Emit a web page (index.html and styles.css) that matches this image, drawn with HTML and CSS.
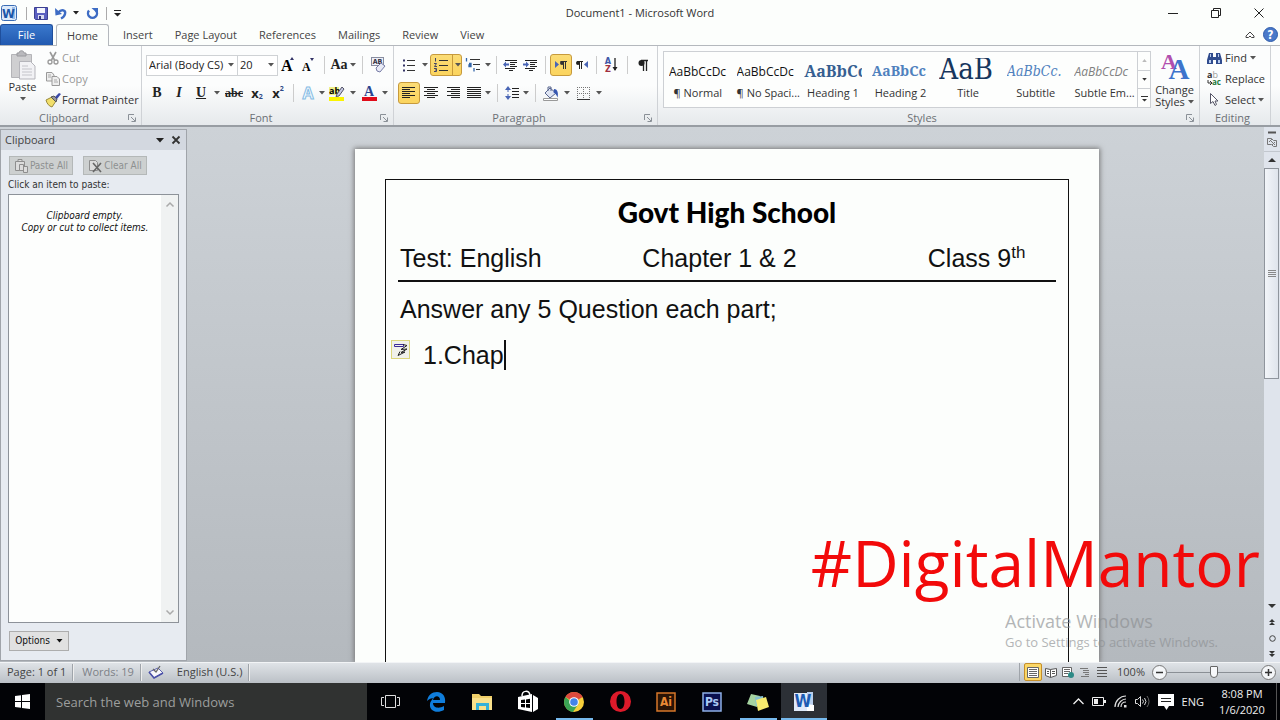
FILE: index.html
```html
<!DOCTYPE html>
<html lang="en">
<head>
<meta charset="utf-8">
<title>Document1 - Microsoft Word</title>
<link rel="stylesheet" href="styles.css">
</head>
<body>
<svg class="defs" aria-hidden="true">
  <symbol id="caret" viewBox="0 0 6 4"><path d="M0 0h6L3 3.5z" fill="currentColor"/></symbol>
  <symbol id="launch" viewBox="0 0 8 8"><path d="M.5 6V.5H6M3 3l4 4M7.500 3.500v4h-4" fill="none" stroke="#8a9097"/></symbol>
</svg>

<header class="titlebar">
  <div class="quick">
    <button aria-label="Word"><svg width="16" height="16" viewBox="0 0 16 16"><rect x=".5" y=".5" width="15" height="15" rx="2" fill="#dceafa" stroke="#3a6cb4"/><path d="M11 2h3v12h-3z" fill="#9dbde6"/><text class="glyph" x="7.500" y="12.500" font-size="13" fill="#1c57a8">W</text></svg></button>
    <i class="bar"></i>
    <button aria-label="Save"><svg width="14" height="14" viewBox="0 0 14 14"><path d="M.5 1.500h13v12h-12l-1-1z" fill="#5a5fc0" stroke="#3b3f91"/><path d="M3 2h8v5H3z" fill="#f3f5fc"/><path d="M4 9h6v4H4z" fill="#d7daf0"/><path d="M5 10h2v3H5z" fill="#33377f"/></svg></button>
    <button class="undo" aria-label="Undo"><svg width="12" height="13" viewBox="0 0 12 13"><path d="M3 5.500c4-4 8-2 7 1.500-.4 2-2 3.500-4 4.500" fill="none" stroke="#3d6cc4" stroke-width="2.400"/><path d="M0 1l.5 7.500L7 7z" fill="#3d6cc4"/></svg><svg class="c" width="6" height="4"><use href="#caret"/></svg></button>
    <button aria-label="Repeat"><svg width="13" height="13" viewBox="0 0 13 13"><path d="M3 3.500a4.500 4.500 0 1 0 7 0" fill="none" stroke="#3d6cc4" stroke-width="2.400"/><path d="M5.500 1h6.500v6z" fill="#3d6cc4"/></svg></button>
    <i class="bar"></i>
    <button aria-label="Customize Quick Access Toolbar"><svg width="7" height="7" viewBox="0 0 7 7"><path d="M0 0h7v1H0zM0 3h7L3.500 6.500z" fill="#222"/></svg></button>
  </div>
  <h1>Document1 - Microsoft Word</h1>
  <div class="winbtns">
    <button aria-label="Minimize"><svg width="10" height="10" viewBox="0 0 10 10"><path d="M0 5.500h10" stroke="#222"/></svg></button>
    <button aria-label="Restore"><svg width="10" height="10" viewBox="0 0 10 10" fill="none" stroke="#222"><path d="M.5 2.500h7v7h-7zM2.500 2.500v-2h7v7h-2"/></svg></button>
    <button aria-label="Close"><svg width="10" height="10" viewBox="0 0 10 10" stroke="#222"><path d="M.5.5l9 9M9.500.5l-9 9"/></svg></button>
  </div>
</header>

<nav class="tabs">
  <button class="file">File</button>
  <button class="on">Home</button>
  <button>Insert</button>
  <button>Page Layout</button>
  <button>References</button>
  <button>Mailings</button>
  <button>Review</button>
  <button>View</button>
  <div class="help">
    <button aria-label="Minimize the Ribbon"><svg width="10" height="8" viewBox="0 0 10 8"><path d="M1 5l4-4 4 4v1.500H6.500L5 5 3.500 6.500H1z" fill="#fff" stroke="#444"/></svg></button>
    <button aria-label="Help"><svg width="15" height="15" viewBox="0 0 15 15"><circle cx="7.500" cy="7.500" r="7" fill="#4a79c9" stroke="#2f5cab"/><text class="glyph" x="7.500" y="12" font-size="12" fill="#fff">?</text></svg></button>
  </div>
</nav>

<section class="ribbon">
  <div class="group clip">
    <div class="body">
      <button class="big"><svg width="26" height="30" viewBox="0 0 26 30"><path d="M1.500 4.500h20v23h-20z" fill="#cfcfd1" stroke="#b4b4b8"/><path d="M7 6V3h2c0-3 5-3 5 0h2v3z" fill="#b9b9bd" stroke="#9a9a9e"/><path d="M9.500 11.500h11l4.500 4.500v13H9.500z" fill="#f2f2f5" stroke="#b5b5bb"/><path d="M12 16h6M12 19h10M12 22h10M12 25h10" stroke="#c4c4ca"/></svg><span>Paste</span><svg class="c" width="6" height="4"><use href="#caret"/></svg></button>
      <div class="stack">
        <button class="dim"><svg width="16" height="14" viewBox="0 0 16 14" fill="none" stroke="#999"><path d="M5 1l4.500 8M11 1L6.500 9" stroke-width="1.600"/><circle cx="5" cy="11" r="2" stroke-width="1.300"/><circle cx="11" cy="11" r="2" stroke-width="1.300"/></svg>Cut</button>
        <button class="dim"><svg width="16" height="14" viewBox="0 0 16 14" fill="#eee" stroke="#999"><path d="M1.500.5H7L9 3v6H1.500z"/><path d="M7 4.500h5l2.500 2.500v6.500H7z"/><path d="M3 3h3M3 5h3M9 8h3M9 10h4" stroke="#aaa"/></svg>Copy</button>
        <button><svg width="16" height="14" viewBox="0 0 16 14"><path d="M1 7l6-3 4 4-4 6c-3-1-5-3-6-7z" fill="#f2df6b" stroke="#9a8a3a"/><path d="M6 4l3-1 3 3-1 3z" fill="#999" stroke="#555"/><path d="M10 4l4-4 2 1-4 5z" fill="#3a49a8"/></svg>Format Painter</button>
      </div>
    </div>
    <footer><span>Clipboard</span><svg width="8" height="8"><use href="#launch"/></svg></footer>
  </div>

  <div class="group font">
    <div class="body rows">
      <div class="row">
        <div class="combo name"><select aria-label="Font"><option>Arial (Body CS)</option></select><svg class="c" width="6" height="4"><use href="#caret"/></svg></div>
        <div class="combo size"><select aria-label="Font size"><option>20</option></select><svg class="c" width="6" height="4"><use href="#caret"/></svg></div>
        <button class="w20 serif" aria-label="Grow font"><svg width="16" height="16" viewBox="0 0 16 16"><text x="1" y="14" font-size="16">A</text><path d="M10 3l2-3 2 3z" fill="#336"/></svg></button>
        <button class="w20 serif" aria-label="Shrink font"><svg width="16" height="16" viewBox="0 0 16 16"><text x="2" y="14" font-size="12">A</text><path d="M10 1l2 3 2-3z" fill="#336"/></svg></button>
        <i class="sep"></i>
        <button class="w26 serif">Aa<svg class="c" width="6" height="4"><use href="#caret"/></svg></button>
        <i class="sep"></i>
        <button class="w20" aria-label="Clear formatting"><svg width="16" height="16" viewBox="0 0 16 16"><rect x="1.500" y=".5" width="12" height="8" fill="#eef0f8" stroke="#888da0"/><text class="glyph" x="7.500" y="7" font-size="7" fill="#334">AB</text><path d="M6 11l5-5 4 3-5 6-3-1z" fill="#e8eaf6" stroke="#777ca6"/></svg></button>
      </div>
      <div class="row">
        <button class="w22 serif"><b>B</b></button>
        <button class="w22 serif"><i>I</i></button>
        <button class="split serif"><u>U</u><svg class="c" width="6" height="4"><use href="#caret"/></svg></button>
        <button class="w24 serif small"><s>abc</s></button>
        <button class="w22 sans" aria-label="Subscript">x<sub>2</sub></button>
        <button class="w20 sans" aria-label="Superscript">x<sup>2</sup></button>
        <i class="sep n"></i>
        <button class="split t" aria-label="Text effects"><svg width="14" height="14" viewBox="0 0 14 14"><text class="glyph fx" x="7" y="13" font-size="16">A</text></svg><svg class="c" width="6" height="4"><use href="#caret"/></svg></button>
        <button class="split" aria-label="Highlight"><svg width="16" height="15" viewBox="0 0 16 15"><path d="M0 1h10v8H0z" fill="#eef08a"/><text x="0" y="8" font-size="9" font-weight="bold">ab</text><path d="M8 8l5-7 2 2-5 7-3 .5z" fill="#c4c8e2" stroke="#556"/><path d="M0 11h15v4H0z" fill="#fbf400"/></svg><svg class="c" width="6" height="4"><use href="#caret"/></svg></button>
        <button class="split serif" aria-label="Font color"><svg width="15" height="15" viewBox="0 0 15 15"><text x="2" y="10" font-size="14" fill="#2b4590">A</text><path d="M0 11h15v4H0z" fill="#e00b19"/></svg><svg class="c" width="6" height="4"><use href="#caret"/></svg></button>
      </div>
    </div>
    <footer><span>Font</span><svg width="8" height="8"><use href="#launch"/></svg></footer>
  </div>

  <div class="group para">
    <div class="body rows">
      <div class="row">
        <button class="split" aria-label="Bullets"><svg width="14" height="14" viewBox="0 0 14 14" stroke="#333"><path d="M5 2.500h8M5 7.500h8M5 12.500h8"/><path d="M1 2.500h2M1 7.500h2M1 12.500h2" stroke="#336" stroke-width="2"/></svg><svg class="c" width="6" height="4"><use href="#caret"/></svg></button>
        <button class="split on two" aria-label="Numbering"><svg width="14" height="14" viewBox="0 0 14 14" stroke="#333"><path d="M5 2.500h9M5 7.500h9M5 12.500h9"/><path d="M1.500 0v3.500M0 5.500h2.500L.5 8.500H3M0 10.500h2.500v3H0M1 12h1" fill="none" stroke="#446"/></svg><svg class="c" width="6" height="4"><use href="#caret"/></svg></button>
        <button class="split m" aria-label="Multilevel list"><svg width="16" height="14" viewBox="0 0 16 14" stroke="#333" fill="none"><path d="M5 1.500h10M8 6.500h7M11 11.500h4"/><path d="M1.500 0v3.500M4 5.500h2v3H4V7h2M9 10v3.500" stroke="#36a" stroke-width="1.300"/></svg><svg class="c" width="6" height="4"><use href="#caret"/></svg></button>
        <i class="sep s"></i>
        <button class="w20" aria-label="Decrease indent"><svg width="15" height="13" viewBox="0 0 15 13" stroke="#222"><path d="M2 1.500h12M7 3.500h7M7 5.500h5M7 7.500h7M2 9.500h10M6 11.500h4"/><path d="M0 5.500l3-3v2h3v2H3v2z" fill="#4965b5" stroke="none"/></svg></button>
        <button class="w20" aria-label="Increase indent"><svg width="15" height="13" viewBox="0 0 15 13" stroke="#222"><path d="M2 1.500h12M7 3.500h7M7 5.500h5M7 7.500h7M2 9.500h10M6 11.500h4"/><path d="M6 5.500l-3-3v2H0v2h3v2z" fill="#4965b5" stroke="none"/></svg></button>
        <i class="sep n"></i>
        <button class="w22 on" aria-label="Left-to-right"><svg width="14" height="10" viewBox="0 0 14 10"><path d="M1 1v7l4-3.500z" fill="#4965b5"/><path d="M6.500 1.500H13M9.500 1v8M11.500 1v8" stroke="#333"/><circle cx="8" cy="3" r="2" fill="#333"/></svg></button>
        <button class="w20" aria-label="Right-to-left"><svg width="14" height="10" viewBox="0 0 14 10"><path d="M13 1v7L9 4.500z" fill="#4965b5"/><path d="M2 1.500h6M4.500 1v8M6.500 1v8" stroke="#222"/><circle cx="3" cy="3" r="2" fill="#222"/></svg></button>
        <i class="sep s"></i>
        <button class="w22" aria-label="Sort"><svg width="14" height="16" viewBox="0 0 14 16"><text class="glyph" x="4" y="7" font-size="9" fill="#4058a8">A</text><text class="glyph" x="4" y="15" font-size="9" fill="#a03040">Z</text><path d="M11 1v12" stroke="#222" stroke-width="1.300"/><path d="M8.500 10h5L11 14z" fill="#222"/></svg></button>
        <i class="sep n"></i>
        <button class="w22" aria-label="Show paragraph marks"><svg width="10" height="13" viewBox="0 0 10 13"><path d="M3 1.500h7M5.500 1v11M8.500 1v11" stroke="#222" stroke-width="1.300"/><circle cx="3.500" cy="4" r="3" fill="#222"/></svg></button>
      </div>
      <div class="row">
        <button class="w22 on" aria-label="Align left"><svg width="14" height="12" viewBox="0 0 14 12" stroke="#222"><path d="M0 .5h13M0 2.500h8M0 4.500h13M0 6.500h8M0 8.500h13M0 10.500h8"/></svg></button>
        <button class="w22" aria-label="Center"><svg width="14" height="12" viewBox="0 0 14 12" stroke="#222"><path d="M0 .5h14M3 2.500h8M0 4.500h14M3 6.500h8M0 8.500h14M3 10.500h8"/></svg></button>
        <button class="w22" aria-label="Align right"><svg width="14" height="12" viewBox="0 0 14 12" stroke="#222"><path d="M1 .5h13M5 2.500h9M1 4.500h13M5 6.500h9M1 8.500h13M5 10.500h9"/></svg></button>
        <button class="split t" aria-label="Justify"><svg width="14" height="12" viewBox="0 0 14 12" stroke="#222"><path d="M0 .5h14M0 2.500h14M0 4.500h14M0 6.500h14M0 8.500h14M0 10.500h14"/></svg><svg class="c" width="6" height="4"><use href="#caret"/></svg></button>
        <i class="sep n"></i>
        <button class="split t" aria-label="Line spacing"><svg width="14" height="14" viewBox="0 0 14 14" stroke="#222"><path d="M7 2.500h7M7 5.500h7M7 8.500h7M7 11.500h7"/><path d="M3 3v3M3 8v3" stroke="#4965b5"/><path d="M0 4l3-4 3 4zM0 10l3 4 3-4z" fill="#4965b5" stroke="none"/></svg><svg class="c" width="6" height="4"><use href="#caret"/></svg></button>
        <i class="sep n"></i>
        <button class="split" aria-label="Shading"><svg width="16" height="15" viewBox="0 0 16 15"><path d="M7 2l6 5-6 5-5-5z" fill="#dfe5f3" stroke="#57648e"/><path d="M5 5V1h3v4" fill="none" stroke="#57648e"/><path d="M11 3c4 0 4.500 5 3.500 8.500-1-2.500-2-4-4-5z" fill="#3556b0"/><path d="M.5 12.500h14v2H.5z" fill="#fff" stroke="#999"/></svg><svg class="c" width="6" height="4"><use href="#caret"/></svg></button>
        <button class="split" aria-label="Borders"><svg width="13" height="13" viewBox="0 0 13 13" stroke="#777"><path d="M0 .5h13M0 6.500h13M.5 0v12M6.500 0v12M12.500 0v12" stroke-dasharray="1 1"/><path d="M0 12.500h13" stroke="#333"/></svg><svg class="c" width="6" height="4"><use href="#caret"/></svg></button>
      </div>
    </div>
    <footer><span>Paragraph</span><svg width="8" height="8"><use href="#launch"/></svg></footer>
  </div>

  <div class="group styles">
    <div class="body">
      <div class="gallery">
        <button><span class="p">AaBbCcDc</span><span>¶ Normal</span></button>
        <button><span class="p">AaBbCcDc</span><span>¶ No Spaci...</span></button>
        <button><span class="p h1">AaBbCc</span><span>Heading 1</span></button>
        <button><span class="p h2">AaBbCc</span><span>Heading 2</span></button>
        <button><span class="p title">AaB</span><span>Title</span></button>
        <button><span class="p sub">AaBbCc.</span><span>Subtitle</span></button>
        <button><span class="p em">AaBbCcDc</span><span>Subtle Em...</span></button>
        <div class="scroller">
          <button aria-label="Up"><svg width="5" height="3" viewBox="0 0 6 4"><path d="M0 4h6L3 0z" fill="#bbb"/></svg></button>
          <button aria-label="Down"><svg width="5" height="3"><use href="#caret"/></svg></button>
          <button aria-label="More"><svg width="7" height="7" viewBox="0 0 7 7"><path d="M0 1h7v1H0zM1 4h5L3.500 6.500z" fill="#333"/></svg></button>
        </div>
      </div>
      <button class="big change"><svg width="28" height="28" viewBox="0 0 28 28"><text class="glyph s" x="8" y="17" font-size="22" fill="#b14fae">A</text><text class="glyph s" x="18" y="27" font-size="29" fill="#3d74cc">A</text></svg><span>Change</span><span class="line">Styles<svg class="c" width="6" height="4"><use href="#caret"/></svg></span></button>
    </div>
    <footer><span>Styles</span><svg width="8" height="8"><use href="#launch"/></svg></footer>
  </div>

  <div class="group edit">
    <div class="body">
      <div class="stack">
        <button><svg width="15" height="13" viewBox="0 0 15 13"><path d="M2 1h4v4h3V1h4l2 7v4H9V8H6v4H0V8z" fill="#304c8e"/><path d="M2 8h2v3H2zM11 8h2v3h-2zM3 2h1v3H3zM11 2h1v3h-1z" fill="#b9cdf0"/></svg>Find<svg class="c" width="6" height="4"><use href="#caret"/></svg></button>
        <button><svg width="15" height="14" viewBox="0 0 15 14"><text x="0" y="6" font-size="9" font-weight="bold" fill="#333">a<tspan font-weight="normal" fill="#999">b</tspan></text><text x="5" y="13" font-size="8" font-weight="bold" fill="#257a3b">ac</text><path d="M1 8v3h3M3 9l2 2-2 2" fill="none" stroke="#333"/></svg>Replace</button>
        <button><svg width="15" height="13" viewBox="0 0 15 13"><path d="M3.500.5v10l2.500-2 2 4 1.500-1-1.500-3.500h3z" fill="#fff" stroke="#556"/></svg>Select<svg class="c" width="6" height="4"><use href="#caret"/></svg></button>
      </div>
    </div>
    <footer><span>Editing</span></footer>
  </div>
</section>

<main class="work">
  <aside class="pane">
    <header><h2>Clipboard</h2><button aria-label="Pane menu"><svg width="8" height="5" viewBox="0 0 8 5"><path d="M0 0h8L4 4.500z" fill="#222"/></svg></button><button aria-label="Close pane"><svg width="8" height="8" viewBox="0 0 8 8"><path d="M.5.5l7 7M7.500.5l-7 7" stroke="#333" stroke-width="1.800"/></svg></button></header>
    <div class="acts">
      <button disabled><svg width="15" height="14" viewBox="0 0 15 14" fill="#dcdcdc" stroke="#8e8e8e"><path d="M1.500 2.500h9v9h-9zM4 2V.5h4V2"/><path d="M5.500 5.500h4v6h-4zM9.500 7.500h4v6h-4z"/></svg>Paste All</button>
      <button disabled><svg width="15" height="14" viewBox="0 0 15 14" fill="#dcdcdc" stroke="#8e8e8e"><path d="M1.500 1.500h6l2 2v8h-8z"/><path d="M5 4l8 9M13 4l-8 9" stroke="#666" stroke-width="1.600"/></svg>Clear All</button>
    </div>
    <p class="hint">Click an item to paste:</p>
    <div class="list">
      <p>Clipboard empty.<br>Copy or cut to collect items.</p>
      <div class="lbar">
        <svg width="8" height="5" viewBox="0 0 8 5"><path d="M.5 4.500L4 1l3.500 3.500" fill="none" stroke="#aaa" stroke-width="1.500"/></svg>
        <svg width="8" height="5" viewBox="0 0 8 5"><path d="M.5.5L4 4 7.500.5" fill="none" stroke="#aaa" stroke-width="1.500"/></svg>
      </div>
    </div>
    <button class="opts">Options<svg width="7" height="4"><use href="#caret"/></svg></button>
  </aside>

  <div class="canvas">
    <article class="page">
      <div class="frame">
        <h2>Govt High School</h2>
        <div class="info"><span>Test: English</span><span>Chapter 1 &amp; 2</span><span>Class 9<sup>th</sup></span></div>
        <p>Answer any 5 Question each part;</p>
        <div class="item">
          <button class="smart" aria-label="AutoCorrect options"><svg width="15" height="15" viewBox="0 0 15 15" fill="none"><path d="M1.500 2.500h9v2h-9z" stroke="#3b2a9a"/><path d="M10 2.500l4 1-6 4 6-.5-6 3.500 4-.5-7 3.500 2-4" stroke="#222"/></svg></button>
          <span>1.</span><span class="typed">Chap</span>
        </div>
      </div>
    </article>
  </div>

  <div class="vscroll">
    <button class="ruler" aria-label="View ruler"><svg width="12" height="18" viewBox="0 0 12 18" fill="none" stroke="#777"><path d="M2 1.500h8" stroke="#555" stroke-width="2"/><path d="M1.500 7.500h4l2 2h3v6h-3l-2-2h-4zM4 9l5 5M6 8l-3 3M9 11l-3 3"/></svg></button>
    <button class="up" aria-label="Scroll up"><svg width="8" height="4" viewBox="0 0 8 4"><path d="M0 4h8L4 0z" fill="#333"/></svg></button>
    <div class="track"><div class="thumb"><svg width="8" height="7" viewBox="0 0 8 7"><path d="M0 .5h8M0 2.500h8M0 4.500h8M0 6.500h8" stroke="#888"/></svg></div></div>
    <button aria-label="Scroll down"><svg width="8" height="4" viewBox="0 0 8 4"><path d="M0 0h8L4 4z" fill="#333"/></svg></button>
    <button aria-label="Previous page"><svg width="6" height="6" viewBox="0 0 6 6"><path d="M0 3h6L3 0zM0 6h6L3 3z" fill="#333"/></svg></button>
    <button aria-label="Browse object"><svg width="7" height="7" viewBox="0 0 7 7"><circle cx="3.500" cy="3.500" r="2.800" fill="none" stroke="#444"/></svg></button>
    <button aria-label="Next page"><svg width="6" height="6" viewBox="0 0 6 6"><path d="M0 0h6L3 3zM0 3h6L3 6z" fill="#333"/></svg></button>
  </div>

  <div class="brand">#DigitalMantor</div>
  <div class="activate"><strong>Activate Windows</strong><span>Go to Settings to activate Windows.</span></div>
</main>

<footer class="status">
  <span class="cell">Page: 1 of 1</span>
  <span class="cell dim">Words: 19</span>
  <span class="cell lang"><svg width="16" height="14" viewBox="0 0 16 14"><path d="M1 7l9-4 5 5-9 5z" fill="#f7f7fb" stroke="#5d63b0"/><path d="M1 7l5 6 9-5" fill="none" stroke="#4a50a8" stroke-width="1.600"/><path d="M5 4l3 3 4-6" fill="none" stroke="#666" stroke-width="1.300"/></svg>English (U.S.)</span>
  <div class="views">
    <button class="on" aria-label="Print layout"><svg width="12" height="11" viewBox="0 0 12 11"><path d="M.5.500h11v10H.5z" fill="#fff" stroke="#666"/><path d="M2 2.500h8M2 4.500h8M2 6.500h8M2 8.500h8" stroke="#666"/></svg></button>
    <button aria-label="Full screen reading"><svg width="12" height="11" viewBox="0 0 12 11" fill="#fff" stroke="#555"><path d="M.5 1.500l5 1 6-1v7l-6 2-5-2zM5.500 2.500v8M2 4.500h2M2 6.500h2M7 4.500h3M7 6.500h3"/></svg></button>
    <button aria-label="Web layout"><svg width="12" height="11" viewBox="0 0 12 11"><path d="M.5.500h9v9h-9zM2 2.500h6M2 4.500h6M2 6.500h4" fill="#fff" stroke="#666"/><circle cx="9" cy="8" r="3" fill="#2d8a86"/></svg></button>
    <button aria-label="Outline"><svg width="10" height="10" viewBox="0 0 10 10" stroke="#777"><path d="M0 1.500h8M3 3.500h6M3 5.500h6M5 7.500h4M1 9.500h8"/></svg></button>
    <button aria-label="Draft"><svg width="10" height="10" viewBox="0 0 10 10" stroke="#555"><path d="M0 .5h10M0 3.500h10M0 6.500h10M0 9.500h10"/></svg></button>
  </div>
  <span class="pct">100%</span>
  <button class="z" aria-label="Zoom out"><svg width="15" height="15" viewBox="0 0 15 15"><circle cx="7.500" cy="7.500" r="7" fill="#f4f6f8" stroke="#777"/><path d="M4 7.500h7" stroke="#333" stroke-width="1.500"/></svg></button>
  <input class="zoom" type="range" min="0" max="100" value="50" aria-label="Zoom">
  <button class="z" aria-label="Zoom in"><svg width="15" height="15" viewBox="0 0 15 15"><circle cx="7.500" cy="7.500" r="7" fill="#f4f6f8" stroke="#777"/><path d="M4 7.500h7M7.500 4v7" stroke="#333" stroke-width="1.500"/></svg></button>
</footer>

<footer class="taskbar">
  <button class="start" aria-label="Start"><svg width="15" height="15" viewBox="0 0 15 15"><path d="M0 2l6-.8V7H0zM7 1l8-1v7H7zM0 8h6v5.800L0 13zM7 8h8v7l-8-1z" fill="#fff"/></svg></button>
  <input class="search" type="text" placeholder="Search the web and Windows" aria-label="Search">
  <button class="app" aria-label="Task view"><svg width="19" height="14" viewBox="0 0 19 14" fill="none" stroke="#ddd"><path d="M4.500.5h10v12h-10zM3 2.500H.5v8H3M16 2.500h2.500v8H16"/></svg></button>
  <button class="app" aria-label="Edge"><svg width="20" height="20" viewBox="0 0 20 20"><path d="M1 9C2 3 6 0 11 0c6 0 9 5 8 11H7c0 5 6 6 11 3v4C11 22 3 19 4 12c0-2 2-5 4-6-3 0-5 1-7 3zm6-1h7c0-5-6-5-7 0z" fill="#0f7ddb"/></svg></button>
  <button class="app" aria-label="File Explorer"><svg width="20" height="18" viewBox="0 0 20 18"><path d="M0 1h7l2 2h11v14H0z" fill="#f0cf69"/><path d="M0 5h20v12H0z" fill="#f9e08b"/><path d="M4 17V10h13v7h-3v-4H7v4z" fill="#35b1d8"/></svg></button>
  <button class="app" aria-label="Store"><svg width="20" height="22" viewBox="0 0 20 22"><path d="M0 6l14-3v18L0 18zM15 4l5 3v11l-5 3z" fill="#fff"/><path d="M4 5c0-6 7-6 8-1" fill="none" stroke="#fff" stroke-width="1.500"/><path d="M3 9l4-.5V12H3zM8 8.400l4-.6V12H8zM3 13h4v3.500L3 16zM8 13h4v4l-4-.4z" fill="#000"/></svg></button>
  <button class="app run" aria-label="Chrome"><svg width="20" height="20" viewBox="0 0 20 20"><circle cx="10" cy="10" r="10" fill="#f7cf3a"/><path d="M10 10L1.400 5A10 10 0 0 1 18.700 5z" fill="#dd4a3e"/><path d="M1.400 5A10 10 0 0 0 9 20l5.300-8H10z" fill="#3aa455"/><circle cx="10" cy="10" r="4.800" fill="#fff"/><circle cx="10" cy="10" r="3.800" fill="#4484e8"/></svg></button>
  <button class="app" aria-label="Opera"><svg width="21" height="21" viewBox="0 0 21 21"><path d="M10.500 0a10.500 10.500 0 1 0 0 21 10.500 10.500 0 1 0 0-21zm0 3c2.500 0 4 3 4 7.500s-1.500 7.500-4 7.500-4-3-4-7.500 1.500-7.500 4-7.500z" fill="#dd1a2a" fill-rule="evenodd"/></svg></button>
  <button class="app" aria-label="Illustrator"><svg width="20" height="20" viewBox="0 0 20 20"><path d="M1 1h18v18H1z" fill="#2a1405" stroke="#d6772a" stroke-width="1.500"/><text class="glyph" x="10" y="14" font-size="12" fill="#e98a35">Ai</text></svg></button>
  <button class="app" aria-label="Photoshop"><svg width="20" height="20" viewBox="0 0 20 20"><path d="M1 1h18v18H1z" fill="#0a1150" stroke="#8fb0e6" stroke-width="1.500"/><text class="glyph" x="10" y="14" font-size="12" fill="#a9c8f5">Ps</text></svg></button>
  <button class="app run" aria-label="Sticky Notes"><svg width="22" height="18" viewBox="0 0 22 18"><path d="M4 1l9 2-3 11-10-3z" fill="#a5d3a0"/><path d="M8 4l8-1 1 8-8 2z" fill="#86c0cf"/><path d="M9 7l10-3 3 10-11 4z" fill="#f6ea6e"/></svg></button>
  <button class="app run front" aria-label="Word"><svg width="20" height="20" viewBox="0 0 20 20"><path d="M0 1h14v18H0z" fill="#dfeafa"/><path d="M13 0h6v13h-6z" fill="#b9cfee"/><path d="M13 12l7 1v6h-7z" fill="#fff"/><text class="glyph" x="9" y="15" font-size="17" fill="#1d5cb3">W</text></svg></button>
  <div class="tray">
    <svg width="11" height="7" viewBox="0 0 11 7"><path d="M.5 6l5-5 5 5" fill="none" stroke="#eee" stroke-width="1.300"/></svg>
    <svg width="14" height="9" viewBox="0 0 14 9"><path d="M.5.500h11v8H.5z" fill="none" stroke="#eee"/><path d="M2 2h4v5H2zM12 3h2v3h-2z" fill="#eee"/></svg>
    <svg width="13" height="13" viewBox="0 0 13 13" fill="none" stroke="#ddd" stroke-width="1.200"><path d="M1 12C1 6 6 1 12 1M4 12c0-4 4-8 8-8M7 12c0-3 2-5 5-5"/><path d="M10 10h2.500v2.500H10z" fill="#ddd" stroke="none"/></svg>
    <svg width="15" height="13" viewBox="0 0 15 13" fill="none" stroke="#ddd"><path d="M.5 4.500h2l3-3v10l-3-3h-2zM7.500 4.500q2 2 0 4M9.500 3q3 3.500 0 7"/><path d="M12 1q4 5.500 0 11" stroke="#666"/></svg>
    <svg width="16" height="16" viewBox="0 0 16 16"><path d="M0 0h16v12h-5l-2.500 4L6 12H0z" fill="#fff"/><path d="M3 4.500h10M3 7.500h10" stroke="#222"/></svg>
    <span>ENG</span>
    <time><span>8:08 PM</span><span>1/6/2020</span></time>
  </div>
</footer>
</body>
</html>
```

FILE: styles.css
```css
* { box-sizing: border-box; }
body {
  margin: 0;
  height: 100vh;
  display: flex;
  flex-direction: column;
  overflow: hidden;
  background: #fcfefc;
  color: #333;
  font: 11px/14px "Open Sans", "Noto Sans", sans-serif;
}
button, select, input { font: inherit; color: inherit; }
button { margin: 0; padding: 0; border: 0; background: none; display: flex; align-items: center; justify-content: center; white-space: nowrap; }
h1, h2, p { margin: 0; font-weight: 400; }
svg { display: block; flex: none; overflow: visible; }
.defs { position: absolute; width: 0; height: 0; }
.c { color: #555; }
.glyph { font-family: "DejaVu Sans Condensed", "Open Sans", sans-serif; font-weight: bold; text-anchor: middle; }
.glyph.fx { font-family: "Open Sans", sans-serif; fill: #f5fbff; stroke: #86bce4; stroke-width: 1px; }
.glyph.s { font-family: "Liberation Serif", serif; }

/* title bar */
.titlebar { display: grid; grid-template-columns: 1fr auto 1fr; align-items: center; height: 24px; flex: none; padding-bottom: 2px; }
.titlebar h1 { font-size: 11px; }
.quick { display: flex; align-items: center; gap: 7px; padding-left: 1px; height: 20px; }
.quick .undo { gap: 6px; }
.quick .undo .c { color: #222; }
.bar { width: 1px; height: 13px; background: #aaa; }
.bar:nth-of-type(1) { margin: 0 0 0 2px; }
.winbtns { display: flex; justify-content: flex-end; height: 26px; }
.winbtns button { width: 43px; }

/* tabs */
.tabs { display: flex; align-items: flex-end; height: 22px; flex: none; padding-right: 2px; border-bottom: 1px solid #b4b8bd; }
.tabs > button { height: 21px; padding: 0 11px; color: #444; }
.tabs .file { width: 53px; margin-right: 3px; background: linear-gradient(#3a78cc, #2159b0); border: 1px solid #1f4f9c; border-bottom: 0; border-radius: 3px 3px 0 0; color: #fff; }
.tabs .on { width: 53px; height: 22px; margin: 0 3px -1px 0; border: 1px solid #b4b8bd; border-bottom: 0; border-radius: 3px 3px 0 0; background: #fcfefc; }
.help { display: flex; align-items: center; gap: 8px; margin-left: auto; height: 21px; }

/* ribbon */
.ribbon { display: flex; height: 81px; flex: none; background: linear-gradient(#fcfdfd 50%, #e6e9ec); border-bottom: 2px solid #989da3; }
.group { display: flex; flex-direction: column; flex: none; border-right: 1px solid #cfd2d6; }
.clip { width: 142px; }
.font { width: 252px; }
.para { width: 264px; }
.styles { flex: 1; min-width: 0; }
.edit { width: 71px; margin-right: 9px; }
.body { display: flex; height: 64px; }
.group footer { display: flex; align-items: center; height: 15px; padding: 0 5px 0 0; color: #6b7075; }
.group footer span { flex: 1; text-align: center; }
.big { flex-direction: column; justify-content: flex-start; width: 45px; padding-top: 4px; }
.big .c { margin-top: 3px; }
.stack { display: flex; flex-direction: column; padding-top: 2px; }
.stack button { height: 21px; gap: 1px; justify-content: flex-start; }
.stack .dim { color: #999; }
.rows { flex-direction: column; gap: 6px; padding: 8px 0 0 4px; }
.row { display: flex; align-items: center; height: 22px; }
.row button { height: 22px; }
.row .on { background: linear-gradient(#fbdc76, #fbd45e); border: 1px solid #c79a3c; border-radius: 3px; }
.combo { display: flex; align-items: center; height: 21px; padding: 0 3px 0 2px; border: 1px solid #cfd2d5; background: #fff; }
.combo select { appearance: none; flex: 1; min-width: 0; border: 0; padding: 0; background: none; color: #222; }
.name { width: 92px; }
.size { width: 41px; margin-left: -1px; }
.w20 { width: 20px; }
.w22 { width: 22px; }
.w24 { width: 24px; }
.w26 { width: 26px; gap: 2px; }
.split { display: grid; grid-template-columns: 22px 10px; justify-items: center; }
.split.t { grid-template-columns: 20px 8px; }
.split.m { grid-template-columns: 22px 8px; }
.split.two { grid-template-columns: 20px 10px; }
.two .c { box-sizing: content-box; padding: 8px 0 8px 2px; border-left: 1px solid #c79a3c; }
.serif { font: bold 14px/16px "Liberation Serif", serif; color: #222; }
.serif.small { font-size: 12px; }
.sans { font: bold 13px/14px "Open Sans", sans-serif; color: #222; }
.sans sub, .sans sup { font-size: 7px; line-height: 8px; color: #2f4a86; }
.sans sub { margin-top: 8px; }
.sans sup { margin-bottom: 8px; }
.sep { width: 12px; height: 18px; flex: none; background: linear-gradient(#ccc, #ccc) center / 1px 100% no-repeat; }
.sep.n { width: 10px; }
.sep.s { width: 8px; }

.styles .body { padding: 5px 1px 0 5px; }
.gallery { display: flex; flex: 1; min-width: 0; height: 57px; border: 1px solid #cdd0d4; background: #fdfefd; }
.gallery > button { flex: 1; min-width: 0; flex-direction: column; gap: 3px; padding: 6px 5px 0; justify-content: flex-start; }
.gallery button > span { max-width: 100%; }
.p { width: 100%; height: 25px; font: 12px/28px "Open Sans", sans-serif; color: #111; overflow: hidden; text-align: left; }
.p.h1 { font: bold 16px/26px "Noto Serif", "DejaVu Serif Condensed", "Liberation Serif", serif; color: #365f91; }
.p.h2 { font: bold 14px/26px "Noto Serif", "DejaVu Serif Condensed", "Liberation Serif", serif; color: #4f81bd; }
.p.title { font: 29px/22px "DejaVu Serif Condensed", "Liberation Serif", serif; color: #17365d; }
.p.sub { font: italic 14px/26px "DejaVu Serif Condensed", "Liberation Serif", serif; color: #4f81bd; }
.p.em { font-style: italic; color: #808080; }
.scroller { display: flex; flex-direction: column; width: 13px; border-left: 1px solid #cdd0d4; }
.scroller button { flex: 1; border-bottom: 1px solid #cdd0d4; }
.scroller button:last-child { border: 0; }
.change { width: 47px; padding-top: 1px; line-height: 12px; }
.change > svg { margin-bottom: 4px; }
.line { display: flex; align-items: center; gap: 3px; }
.line .c { margin: 0; }
.edit .stack { padding-left: 7px; }
.edit .stack button { gap: 3px; }

/* workspace */
.work { position: relative; display: flex; flex: 1; min-height: 0; background: linear-gradient(#cdd2d7, #b4b9be); }
.pane { display: flex; flex-direction: column; align-items: flex-start; width: 187px; margin: 2px 0 1px; padding-bottom: 9px; border: 1px solid #a0a4aa; background: #e7ebf1; }
.pane header { display: flex; align-items: center; align-self: stretch; gap: 8px; height: 20px; padding: 0 6px 0 4px; background: #d3d8e0; }
.pane h2 { flex: 1; font-size: 11px; color: #444; }
.acts { display: flex; gap: 10px; padding: 6px 0 0 8px; }
.acts button { width: 64px; height: 19px; gap: 1px; border: 1px solid #b4b8b8; background: #cdd0d0; color: #8d9090; font: 10px/14px "DejaVu Sans Condensed", "Open Sans", sans-serif; }
.pane .hint { padding: 3px 0 2px 7px; font: 10px/14px "DejaVu Sans Condensed", "Open Sans", sans-serif; white-space: nowrap; }
.list { display: flex; flex: 1; width: 171px; margin: 0 0 8px 7px; border: 1px solid #8d9299; background: #fdfefd; }
.list p { flex: 1; padding-top: 15px; text-align: center; font: italic 10px/12px "DejaVu Sans Condensed", sans-serif; color: #111; white-space: nowrap; }
.lbar { display: flex; flex-direction: column; justify-content: space-between; align-items: center; width: 17px; padding: 7px 0; background: #f0f2f2; }
.opts { height: 20px; width: 60px; margin-left: 8px; gap: 6px; border: 1px solid #adadad; background: #e1e1e1; color: #111; font: 10px/14px "DejaVu Sans Condensed", sans-serif; }
.canvas { flex: 1; display: flex; justify-content: center; padding: 22px 0 0 3px; overflow: hidden; }
.page { width: 69%; min-width: 744px; padding: 30px 30px 0; display: flex; background: #fcfefc; box-shadow: 0 0 5px 1px #777; }
.frame { flex: 1; padding: 16px 12px 0; border: 1px solid #111; border-bottom: 0; color: #111; font: 25px/46px "Liberation Sans", Arial, sans-serif; }
.frame h2 { font: 900 28px/32px "Lato Black", Lato, sans-serif; text-align: center; color: #000; }
.info { display: grid; grid-template-columns: 242fr 285fr 128fr; margin: 9px 0 4px; padding-left: 2px; border-bottom: 2px solid #111; line-height: 43px; }
.info sup { font-size: 17px; line-height: 0; }
.frame p { padding-left: 2px; }
.item { position: relative; display: flex; padding-left: 25px; }
.typed { border-right: 2px solid #111; height: 30px; line-height: 30px; margin: 8px 0 0; }
.smart { position: absolute; left: -7px; top: 8px; width: 19px; height: 19px; border: 1px solid #dcd67c; background: #f0f1ea; }

.vscroll { display: flex; flex-direction: column; width: 16px; background: #dfe4ec; }
.vscroll button { height: 16px; }
.vscroll .ruler { height: 25px; padding-top: 2px; border-bottom: 1px solid #c2c7ce; }
.track { flex: 1; }
.thumb { display: flex; align-items: center; justify-content: center; height: 49%; margin: 0 1px 0 0; border: 1px solid #8f959d; background: linear-gradient(90deg, #f2f5f9, #dfe4ec); }
.brand { position: absolute; right: 20px; bottom: 54px; font: 64px/90px "Open Sans", sans-serif; color: #f20a0a; }
.activate { position: absolute; right: 53px; bottom: 11px; display: flex; flex-direction: column; color: #8c8f92; opacity: .65; font-size: 13px; line-height: 18px; width: 222px; white-space: nowrap; }
.activate strong { font-size: 18px; line-height: 24px; font-weight: 400; }

/* status bar */
.status { display: flex; align-items: center; height: 21px; flex: none; padding: 0 4px 2px 0; border-top: 1px solid #f2f4f6; background: linear-gradient(#dfe3e7, #bbc0c6); color: #444; }
.cell { display: flex; align-items: center; height: 17px; padding: 0 6px 0 7px; border-right: 1px solid #9fa4aa; box-shadow: 1px 0 #eee; }
.cell + .cell { padding: 0 6px 0 9px; }
.status .dim { color: #7c8086; }
.cell.lang { gap: 13px; padding-left: 7px; }
.views { display: flex; margin-left: auto; padding-left: 4px; border-left: 1px solid #9fa4aa; }
.views button { width: 17px; height: 18px; }
.views .on { width: 18px; border: 1px solid #c58f2a; border-radius: 2px; background: #fbd767; }
.pct { padding: 0 7px; }
.zoom { appearance: none; width: 94px; height: 15px; margin: 0; background: linear-gradient(#8a8f95, #8a8f95) center / 100% 1px no-repeat; }
.zoom::-webkit-slider-thumb { appearance: none; width: 8px; height: 12px; border: 1px solid #666; border-radius: 1px 1px 4px 4px; background: #f7f8fa; }

/* taskbar */
.taskbar { display: flex; height: 37px; flex: none; background: #020306; color: #eee; }
.start { width: 45px; }
.search { width: 322px; padding: 0 11px; border: 0; background: #303231; font-size: 13px; }
.search::placeholder { color: #9c9e9d; }
.app { width: 46px; }
.run { background: linear-gradient(#76b9ed, #76b9ed) bottom / 37px 2px no-repeat; }
.front { background: linear-gradient(#76b9ed, #76b9ed) bottom / 100% 2px no-repeat #2c3036; }
.tray { display: flex; align-items: center; gap: 8px; margin: 0 3px 0 auto; padding-right: 9px; border-right: 1px solid #555; font-size: 11px; }
.tray time { display: flex; flex-direction: column; width: 50px; margin-left: 5px; font-size: 11px; line-height: 16px; text-align: center; align-items: center; }
```
